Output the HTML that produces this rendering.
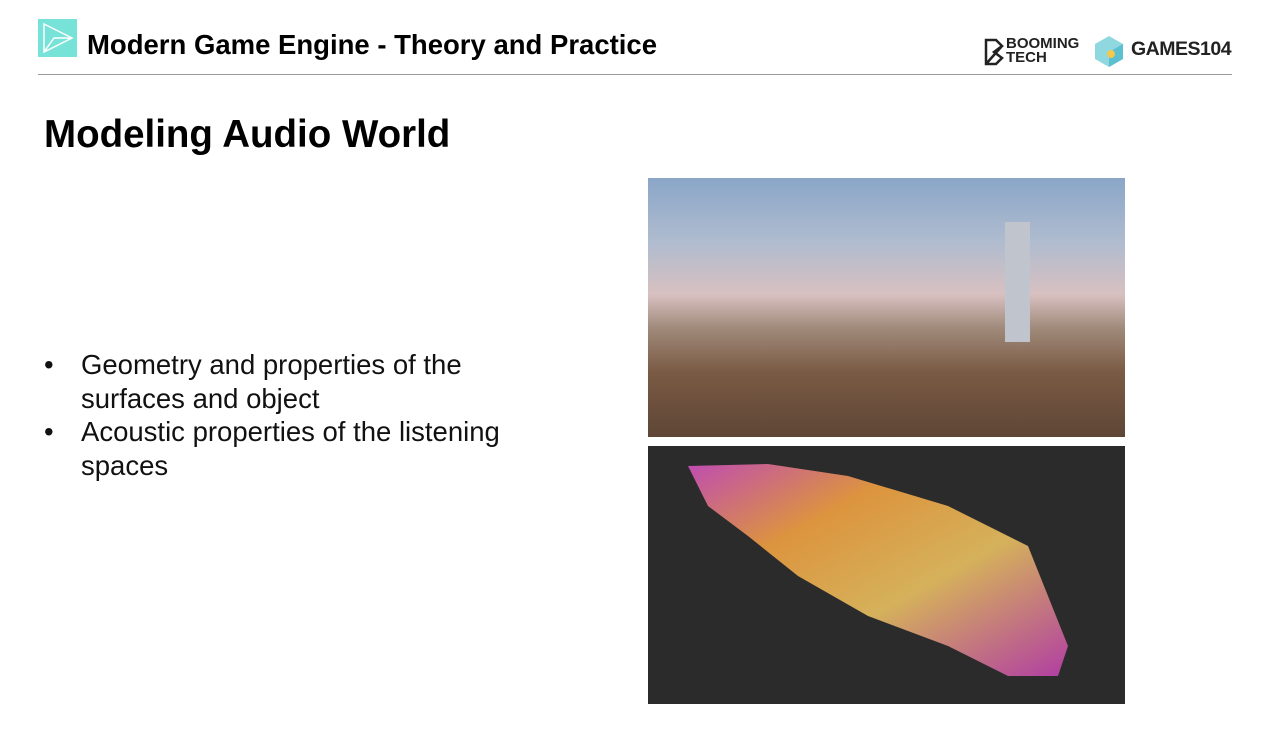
<!DOCTYPE html>
<html><head><meta charset="utf-8"><style>
body{margin:0;width:1280px;height:738px;background:#fff;position:relative;overflow:hidden;font-family:"Liberation Sans",sans-serif;}
.a{position:absolute}
</style></head><body>
<div class="a" style="left:38px;top:19px;width:39px;height:38px;background:#76e2d8"></div>
<svg class="a" style="left:38px;top:19px" width="39" height="38"><path d="M6 5 L34 19 L6 33 Z M6 33 L16 19 L34 19" fill="none" stroke="#fff" stroke-width="1.5"/></svg>
<div class="a" style="left:87px;top:29px;font-size:27.5px;font-weight:bold;color:#000">Modern Game Engine - Theory and Practice</div>
<div class="a" style="left:38px;top:74px;width:1194px;height:1px;background:#999"></div>
<svg class="a" style="left:984px;top:38px" width="22" height="28"><path d="M2 2 H12 L18 8 L10 14 L18 20 L12 26 H2 Z M2 26 L18 8" fill="none" stroke="#222" stroke-width="2.5"/></svg>
<div class="a" style="left:1006px;top:37px;font-size:15px;font-weight:bold;line-height:14px;color:#222">BOOMING<br>TECH</div>
<svg class="a" style="left:1093px;top:34px" width="32" height="34"><path d="M16 2 L30 10 L30 25 L16 33 L2 25 L2 10 Z" fill="#8fd8e0"/><path d="M16 18 L30 10 L30 25 L16 33 Z" fill="#5cc0d0"/><circle cx="18" cy="20" r="4" fill="#f2c94c"/></svg>
<div class="a" style="left:1131px;top:38px;font-size:19.5px;font-weight:bold;color:#222;letter-spacing:-0.5px">GAMES104</div>
<div class="a" style="left:44px;top:113px;font-size:38.5px;font-weight:bold;color:#000">Modeling Audio World</div>
<div class="a" style="left:44px;top:348px;font-size:27.5px;line-height:33.5px;color:#111;white-space:nowrap">
<div style="position:relative;padding-left:37px"><span style="position:absolute;left:0">•</span>Geometry and properties of the<br>surfaces and object</div>
<div style="position:relative;padding-left:37px"><span style="position:absolute;left:0">•</span>Acoustic properties of the listening<br>spaces</div>
</div>
<div class="a" style="left:648px;top:178px;width:477px;height:259px;background:linear-gradient(180deg,#8aa6c8 0%,#b0bccf 25%,#d8c0c0 45%,#a08a7a 58%,#7a5a44 75%,#5e4636 100%)"></div>
<div class="a" style="left:1005px;top:222px;width:25px;height:120px;background:#c0c4cc"></div>
<div class="a" style="left:648px;top:446px;width:477px;height:258px;background:#2b2b2b"></div>
<svg class="a" style="left:648px;top:446px" width="477" height="258"><defs><linearGradient id="g" x1="0" y1="0" x2="1" y2="1"><stop offset="0" stop-color="#d050c0"/><stop offset="0.3" stop-color="#f0a040"/><stop offset="0.6" stop-color="#e8c060"/><stop offset="1" stop-color="#c040b0"/></linearGradient></defs><path d="M40 20 L120 18 L200 30 L300 60 L380 100 L400 150 L420 200 L410 230 L360 230 L300 200 L220 170 L150 130 L100 90 L60 60 Z" fill="url(#g)" opacity="0.9"/></svg>
</body></html>
